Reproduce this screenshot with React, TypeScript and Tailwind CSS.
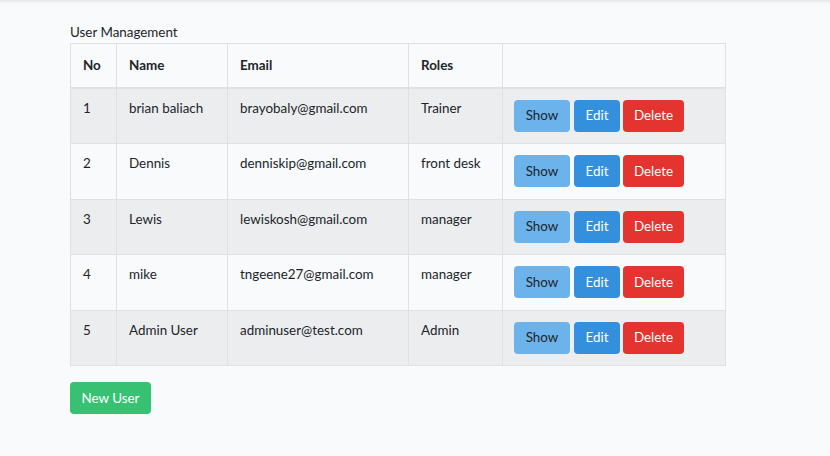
export default function App() {
  const users = [
    { id: 1, name: "brian baliach", email: "brayobaly@gmail.com", role: "Trainer" },
    { id: 2, name: "Dennis", email: "denniskip@gmail.com", role: "front desk" },
    { id: 3, name: "Lewis", email: "lewiskosh@gmail.com", role: "manager" },
    { id: 4, name: "mike", email: "tngeene27@gmail.com", role: "manager" },
    { id: 5, name: "Admin User", email: "adminuser@test.com", role: "Admin" },
  ];

  return (
    <div
      className="min-h-[456px] w-full bg-[#f8fafc] text-[#212529] text-[13.4px]"
      style={{ fontFamily: "Lato, 'Open Sans', sans-serif" }}
    >
      <div className="h-[4px] bg-gradient-to-b from-[#e6e7e9] to-[#f8fafc]" />
      <div className="pl-[70px] pt-[19px]">
        <div className="leading-[18px] mb-[2px]">User Management</div>
        <table className="border-collapse w-[656px] text-left">
          <thead>
            <tr>
              <th className="w-[46px] border border-[#dee2e6] border-b-2 px-[12px] h-[44px] font-bold">No</th>
              <th className="w-[111px] border border-[#dee2e6] border-b-2 px-[12px] font-bold">Name</th>
              <th className="w-[181px] border border-[#dee2e6] border-b-2 px-[12px] font-bold">Email</th>
              <th className="w-[94px] border border-[#dee2e6] border-b-2 px-[12px] font-bold">Roles</th>
              <th className="border border-[#dee2e6] border-b-2 px-[12px]"></th>
            </tr>
          </thead>
          <tbody>
            {users.map((u, i) => (
              <tr key={u.id} className={i % 2 === 0 ? "bg-[#ecedef]" : ""}>
                <td className="border border-[#dee2e6] px-[12px] pt-[10px] pb-[12.5px] align-top leading-[18px]">{u.id}</td>
                <td className="border border-[#dee2e6] px-[12px] pt-[10px] pb-[12.5px] align-top leading-[18px]">{u.name}</td>
                <td className="border border-[#dee2e6] px-[12px] pt-[10px] pb-[12.5px] align-top leading-[18px]">{u.email}</td>
                <td className="border border-[#dee2e6] px-[12px] pt-[10px] pb-[12.5px] align-top leading-[18px]">{u.role}</td>
                <td className="border border-[#dee2e6] px-[11px] pt-[11px] pb-[11.5px] align-top">
                  <div className="flex gap-[4px]">
                    <button className="h-[32px] w-[56px] rounded-[4px] bg-[#6cb2eb] text-[#212529]">Show</button>
                    <button className="h-[32px] w-[46px] rounded-[4px] bg-[#3490dc] text-white">Edit</button>
                    <button className="h-[32px] w-[61px] rounded-[4px] bg-[#e3342f] text-white -ml-[1px]">Delete</button>
                  </div>
                </td>
              </tr>
            ))}
          </tbody>
        </table>
        <button className="mt-[16px] h-[32px] w-[81px] rounded-[4px] bg-[#38c172] text-white">New User</button>
      </div>
    </div>
  );
}
